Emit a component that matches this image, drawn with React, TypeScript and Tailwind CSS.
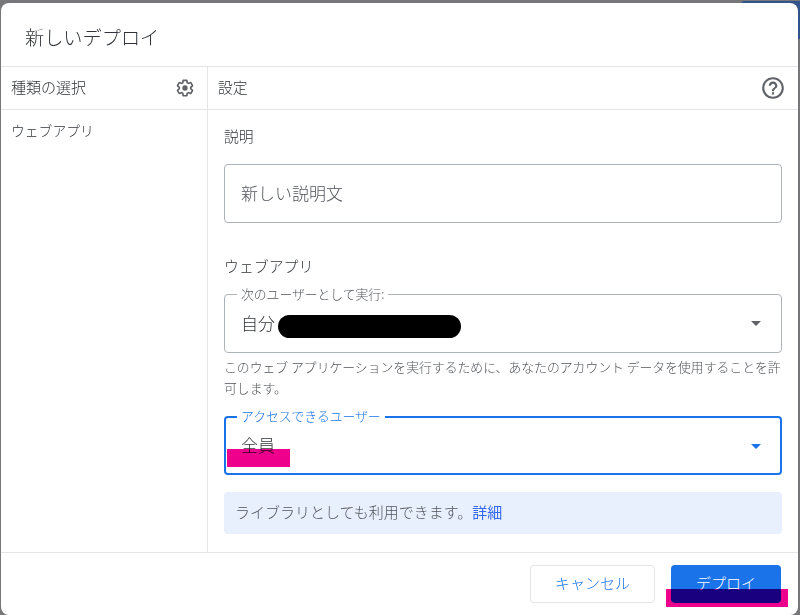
import { useState } from "react";

const CaretIcon = ({ className }: { className: string }) => (
  <svg viewBox="0 0 10 5" className={className} fill="currentColor">
    <path d="M0 0h10L5 5z" />
  </svg>
);

const GearIcon = () => (
  <svg viewBox="0 0 24 24" className="size-5 text-[#5f6368]">
    <path
      fill="currentColor"
      d="M13.85 22.25h-3.7c-.74 0-1.36-.54-1.45-1.27l-.27-1.89c-.27-.14-.53-.29-.79-.46l-1.8.72c-.7.26-1.47-.03-1.81-.65L2.2 15.53c-.35-.66-.2-1.44.36-1.88l1.53-1.19c-.01-.15-.02-.3-.02-.46 0-.15.01-.31.02-.46l-1.52-1.19c-.59-.45-.74-1.26-.37-1.88l1.85-3.19c.34-.62 1.11-.9 1.79-.63l1.81.73c.26-.17.52-.32.78-.46l.27-1.91c.09-.7.71-1.25 1.44-1.25h3.7c.74 0 1.36.54 1.45 1.27l.27 1.89c.27.14.53.29.79.46l1.8-.72c.71-.26 1.48.03 1.82.65l1.84 3.18c.36.66.2 1.44-.36 1.88l-1.52 1.19c.01.15.02.3.02.46s-.01.31-.02.46l1.52 1.19c.56.45.72 1.23.37 1.86l-1.86 3.22c-.34.62-1.11.9-1.8.63l-1.8-.72c-.26.17-.52.32-.78.46l-.27 1.91c-.1.68-.72 1.22-1.46 1.22zm-3.23-2h2.76l.37-2.55.53-.22c.44-.18.88-.44 1.34-.78l.45-.34 2.38.96 1.38-2.4-2.03-1.58.07-.56c.03-.26.06-.51.06-.78s-.03-.53-.06-.78l-.07-.56 2.03-1.58-1.39-2.4-2.39.96-.45-.35c-.42-.32-.87-.58-1.33-.77l-.52-.22-.37-2.55h-2.76l-.37 2.55-.53.21c-.44.19-.88.44-1.34.79l-.45.33-2.38-.95-1.39 2.39 2.03 1.58-.07.56a7 7 0 0 0-.06.79c0 .26.02.53.06.78l.07.56-2.03 1.58 1.38 2.4 2.39-.96.45.35c.43.33.86.58 1.33.77l.53.22.38 2.55z"
    />
    <circle cx="12" cy="12" r="3.2" fill="currentColor" />
  </svg>
);

const HelpIcon = () => (
  <svg viewBox="0 0 24 24" className="size-[26px] text-[#5f6368]" fill="currentColor">
    <path d="M11 18h2v-2h-2v2zm1-16C6.48 2 2 6.48 2 12s4.48 10 10 10 10-4.48 10-10S17.52 2 12 2zm0 18c-4.41 0-8-3.59-8-8s3.59-8 8-8 8 3.59 8 8-3.59 8-8 8zm0-14c-2.21 0-4 1.79-4 4h2c0-1.1.9-2 2-2s2 .9 2 2c0 2-3 1.75-3 5h2c0-2.25 3-2.5 3-5 0-2.21-1.79-4-4-4z" />
  </svg>
);

const App = () => {
  const [description, setDescription] = useState("");

  return (
    <div className="relative h-[615px] w-[800px] overflow-hidden bg-[#77777a] pt-[3px] pr-[2px] pl-px font-['Noto_Sans_CJK_JP',sans-serif] font-light text-[#303438]">
      {/* page behind the dialog */}
      <div className="absolute top-px right-0 h-[38px] w-[59px] rounded-tl bg-[#31548c]" />

      <div className="relative flex h-[612px] flex-col rounded-lg bg-white">
        {/* HEADER */}
        <header className="flex h-16 shrink-0 items-center border-b border-[#e4e5e7] pt-1.5 pl-6">
          <h1 className="text-[19.2px]">新しいデプロイ</h1>
        </header>

        <div className="flex h-[486px] shrink-0 border-b border-[#e4e5e7]">
          {/* TYPE */}
          <aside className="w-[207px] shrink-0 border-r border-[#e4e5e7] text-[15px]">
            <div className="flex h-[43px] items-center justify-between border-b border-[#e4e5e7] pr-3 pl-2.5">
              <span className="pb-0.5">種類の選択</span>
              <GearIcon />
            </div>
            <div className="flex h-[41px] items-center pl-2.5 text-[13.8px]">ウェブアプリ</div>
          </aside>

          {/* SETTINGS */}
          <main className="flex-1">
            <div className="flex h-[43px] items-center justify-between border-b border-[#e4e5e7] pr-3 pl-2.5 text-[14.8px]">
              <span className="pb-0.5">設定</span>
              <HelpIcon />
            </div>

            <div className="px-4">
              <label htmlFor="description" className="block pt-[15px] text-[14.8px] leading-[22px]">
                説明
              </label>
              <input
                id="description"
                value={description}
                onChange={(e) => setDescription(e.target.value)}
                placeholder="新しい説明文"
                className="mt-[17px] block h-[59px] w-full rounded border border-[#aeb3b8] px-4 pb-0.5 text-[17px] outline-none placeholder:text-[#50545a]"
              />

              <h2 className="mt-8 h-[33px] text-[14.9px] leading-[22px]">ウェブアプリ</h2>

              {/* execute as */}
              <fieldset className="-mt-px h-[66px] rounded border border-[#aeb3b8] pr-5 pl-3">
                <legend className="h-[14px] px-1 text-[12.8px] leading-[14px] text-[#505459]">
                  次のユーザーとして実行:
                </legend>
                <div className="flex h-11 items-center justify-between pl-1">
                  <div className="flex items-center">
                    <span className="text-[17px]">自分</span>
                    <span className="mt-1.5 ml-[3px] h-[23px] w-[183px] rounded-full bg-black" />
                  </div>
                  <CaretIcon className="h-[5px] w-2.5 text-[#5f6368]" />
                </div>
              </fieldset>
              <p className="mt-[3px] text-[12.83px] leading-[21px] text-[#505459]">
                このウェブ アプリケーションを実行するために、あなたのアカウント データを使用することを許可します。
              </p>

              {/* access */}
              <fieldset className="mt-3 h-[65px] rounded border-2 border-[#1a73e8] pr-[19px] pl-[11px]">
                <legend className="h-[14px] px-1 text-[12.8px] leading-[12px] text-[#1a73e8]">
                  アクセスできるユーザー
                </legend>
                <div className="relative flex h-11 items-center justify-between pl-1">
                  <span className="pb-0.5 text-[17px]">全員</span>
                  <CaretIcon className="h-[5px] w-2.5 text-[#1a73e8]" />
                  <span className="absolute top-[25px] -left-[10px] h-[18px] w-[63px] bg-[#ef008c] mix-blend-multiply" />
                </div>
              </fieldset>

              <div className="mt-[17px] flex h-[42px] items-center rounded bg-[#e8effd] pb-0.5 pl-[11px] text-[15px] text-[#50545a]">
                ライブラリとしても利用できます。
                <a href="#" className="font-normal text-[#3367f6]">詳細</a>
              </div>
            </div>
          </main>
        </div>

        {/* ACTIONS */}
        <footer className="flex justify-end gap-4 pt-3 pr-[17px]">
          <button
            type="button"
            className="h-[38px] w-[125px] rounded border border-[#e4e5e7] pb-0.5 text-[15px] text-[#1a73e8]"
          >
            キャンセル
          </button>
          <div className="relative">
            <button
              type="button"
              className="h-[38px] w-[110px] rounded bg-[#1a73e8] pb-0.5 text-[15px] text-white"
            >
              デプロイ
            </button>
            <span className="absolute top-6 -left-[5px] h-[18px] w-[122px] bg-[#ef008c] mix-blend-multiply" />
          </div>
        </footer>
      </div>
    </div>
  );
};

export default App;
